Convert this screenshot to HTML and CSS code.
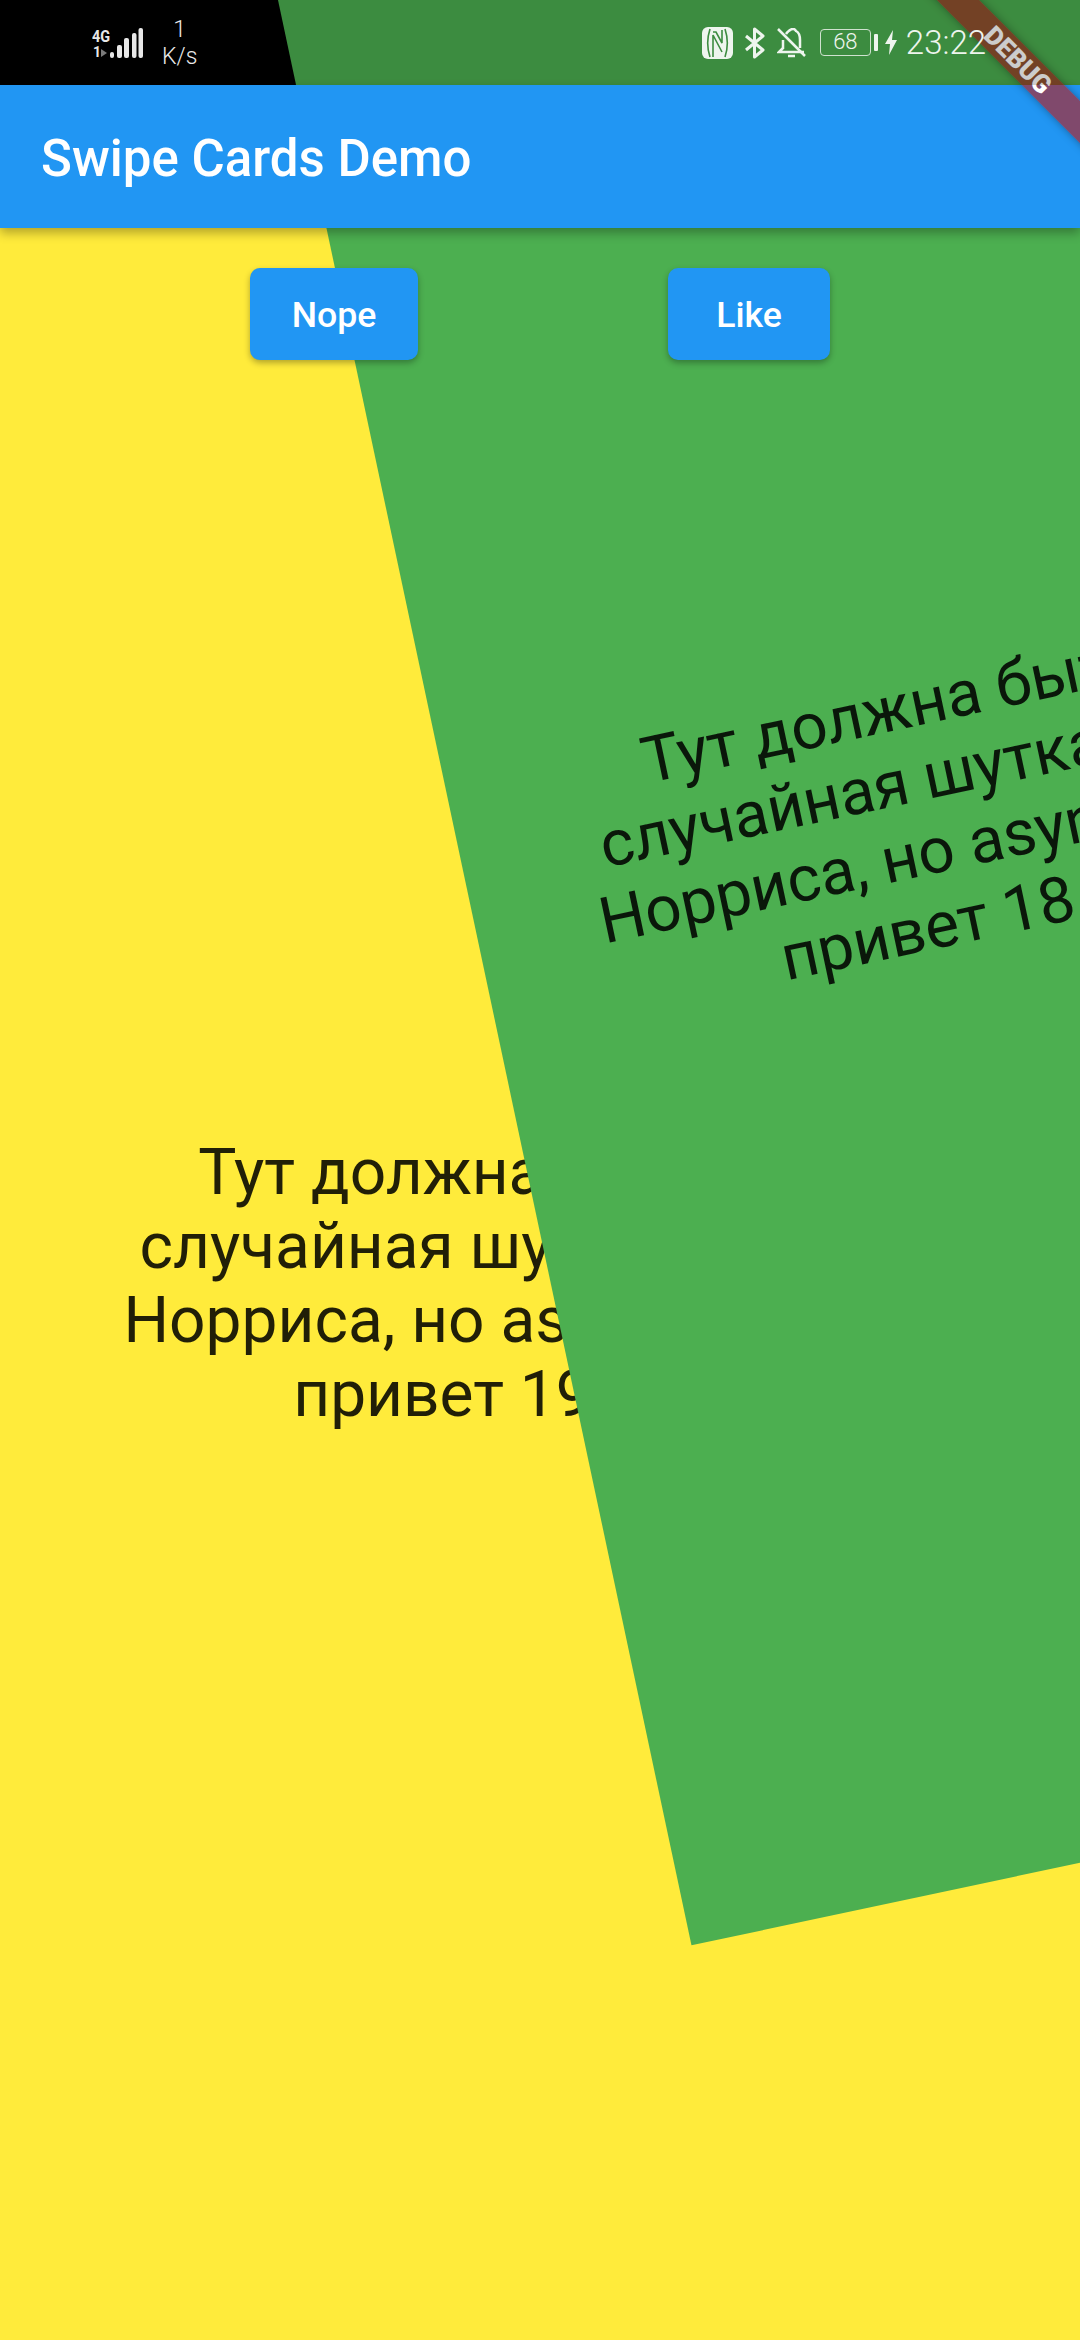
FILE: index.html
```html
<!DOCTYPE html>
<html lang="en">

<head>
    <meta charset="UTF-8">
    <meta name="viewport" content="width=device-width, initial-scale=1.0">
    <title>Swipe Cards Demo</title>
    <link rel="stylesheet" href="styles.css">
</head>

<body>
    <div class="phone">
        <div class="status-bar">
            <div class="status-left">
                <div class="net">
                    <span class="net-type">4G</span>
                    <span class="net-sim">1</span>
                    <svg class="net-arrow" width="6" height="8" viewBox="0 0 6 8"><path d="M0 0 L6 4 L0 8 Z" fill="#7a7a7a"/></svg>
                </div>
                <svg class="signal" width="33" height="30" viewBox="0 0 33 30">
                    <rect x="0" y="24" width="4" height="6" rx="2"/>
                    <rect x="7" y="17" width="5" height="13" rx="2"/>
                    <rect x="14" y="10" width="5" height="20" rx="2"/>
                    <rect x="22" y="5" width="4.500" height="25" rx="2"/>
                    <rect x="28.500" y="0" width="4.500" height="30" rx="2"/>
                </svg>
                <div class="speed"><span>1</span><span>K/s</span></div>
            </div>
            <div class="status-right">
                <svg class="nfc" width="31" height="32" viewBox="0 0 31 32">
                    <rect x="0" y="0" width="31" height="32" rx="6" fill="#eef5ee"/>
                    <path d="M8 2 C5 11 5 21 8 30" fill="none" stroke="#3d8c40" stroke-width="1.600"/>
                    <path d="M23 2 C26 11 26 21 23 30" fill="none" stroke="#3d8c40" stroke-width="1.600"/>
                    <path d="M11 30 L11 8 L20 25 M11 5 L14 5 L20 16 L20 3" fill="none" stroke="#3d8c40" stroke-width="1.600"/>
                </svg>
                <svg class="bluetooth" width="20" height="32" viewBox="0 0 20 32">
                    <path d="M1 9 L18 23 L9.500 30 L9.500 2 L18 9 L1 23" fill="none" stroke="#eef5ee" stroke-width="3" stroke-linejoin="round"/>
                </svg>
                <svg class="bell" width="29" height="30" viewBox="0 0 29 30">
                    <path d="M6 21 L6 12 M9 6 C11 3 12 3 13 2 C16 0 18 1 19 3 C23 5 23 9 23 12 L23 20 M27 24 L2 24 L6 20" fill="none" stroke="#eef5ee" stroke-width="2.500"/>
                    <path d="M11 28 L18 28" stroke="#eef5ee" stroke-width="2.500"/>
                    <path d="M1 1 L28 28" stroke="#eef5ee" stroke-width="2.500"/>
                </svg>
                <div class="battery">68</div>
                <div class="battery-nub"></div>
                <svg class="bolt" width="12" height="25" viewBox="0 0 12 25"><path d="M8 0 L0 14 L5 14 L4 25 L12 10 L7 10 Z" fill="#eef5ee"/></svg>
                <span class="clock">23:22</span>
            </div>
        </div>

        <div class="app-bar">Swipe Cards Demo</div>

        <div class="stage">
            <div class="buttons">
                <button type="button" class="btn btn-nope">Nope</button>
                <button type="button" class="btn btn-like">Like</button>
            </div>
        </div>

        <div class="card card-back">
            <p>Тут должна быть<br>случайная шутка что<br>Норриса, но async нет<br><span class="last-line">привет 19</span></p>
        </div>
        <div class="card card-front">
            <p>Тут должна быть<br>случайная шутка что<br>Норриса, но async нет<br><span class="last-line">привет 18</span></p>
        </div>

        <div class="debug-banner">DEBUG</div>
    </div>
</body>

</html>
```

FILE: styles.css
```css
body {
    margin: 0;
    padding: 0;
    background-color: black;
    font-family: Roboto, sans-serif;
}

.phone {
    position: relative;
    width: 1080px;
    height: 2340px;
    overflow: hidden;
    display: flex;
    flex-direction: column;
}

.status-bar {
    position: relative;
    z-index: 5;
    height: 85px;
    flex-shrink: 0;
    display: flex;
    justify-content: space-between;
    align-items: center;
    padding: 0 94px 0 92px;
    background-color: rgba(0, 0, 0, 0.2);
    color: #eef5ee;
}

.status-left,
.status-right {
    display: flex;
    align-items: center;
}

.net {
    position: relative;
    width: 17px;
    height: 32px;
    font-weight: 700;
    color: #e8e8e8;
}

.net-type {
    position: absolute;
    left: 0;
    top: -1px;
    font-size: 17px;
    transform: scaleX(0.85);
    transform-origin: left;
}

.net-sim {
    position: absolute;
    left: 1px;
    top: 17px;
    font-size: 14px;
}

.net-arrow {
    position: absolute;
    left: 9px;
    top: 22px;
}

.signal {
    fill: #e8e8e8;
    margin-left: 1px;
}

.speed {
    display: flex;
    flex-direction: column;
    align-items: center;
    margin-left: 19px;
    font-size: 23px;
    font-weight: 300;
    line-height: 27px;
    color: #e8e8e8;
}

.bluetooth {
    margin-left: 12px;
}

.bell {
    margin-left: 12px;
}

.battery {
    width: 51px;
    height: 27px;
    margin-left: 14px;
    box-sizing: border-box;
    border: 1.5px solid #cfe2cf;
    border-radius: 4px;
    font-size: 22px;
    font-weight: 300;
    line-height: 24px;
    text-align: center;
}

.battery-nub {
    width: 4px;
    height: 17px;
    margin-left: 3px;
    border-radius: 1px;
    background-color: #eef5ee;
}

.bolt {
    margin-left: 7px;
}

.clock {
    margin-left: 9px;
    font-size: 33px;
    font-weight: 300;
}

.app-bar {
    position: relative;
    z-index: 3;
    height: 143px;
    flex-shrink: 0;
    box-sizing: border-box;
    padding-left: 41px;
    line-height: 147px;
    background-color: #2196f3;
    color: white;
    font-size: 51px;
    font-weight: 500;
    box-shadow: 0 5px 10px rgba(0, 0, 0, 0.3);
}

.stage {
    flex: 1;
    background-color: #ffeb3b;
}

.buttons {
    position: relative;
    z-index: 2;
    display: flex;
    justify-content: space-evenly;
    padding-top: 40px;
}

.btn {
    height: 92px;
    padding: 1px 0 0;
    border: none;
    border-radius: 10px;
    background-color: #2196f3;
    color: white;
    font-family: Roboto, sans-serif;
    font-size: 35.7px;
    font-weight: 500;
    box-shadow: 0 3px 6px rgba(0, 0, 0, 0.3);
}

.btn-nope {
    width: 168px;
}

.btn-like {
    width: 162px;
}

/* the two cards of the swipe stack sit on top of each other */
.card {
    position: absolute;
    width: 908px;
    height: 2112px;
    display: flex;
    justify-content: center;
    align-items: center;
    color: rgba(0, 0, 0, 0.87);
    font-size: 64px;
    line-height: 74px;
    text-align: center;
    white-space: nowrap;
}

.card p {
    margin: 0;
}

.last-line {
    display: inline-block;
    padding-right: 23px;
}

.card-back {
    left: 0;
    top: 228px;
}

.card-front {
    left: 462px;
    top: -238px;
    background-color: #4caf50;
    transform: rotate(-12deg);
}

.debug-banner {
    position: absolute;
    z-index: 4;
    left: 868px;
    top: 45px;
    width: 300px;
    height: 30px;
    background-color: rgba(183, 28, 28, 0.63);
    color: white;
    font-size: 26px;
    font-weight: 900;
    line-height: 30px;
    text-align: center;
    transform: rotate(45deg);
    box-shadow: 0 0 8px rgba(0, 0, 0, 0.35);
}
```
